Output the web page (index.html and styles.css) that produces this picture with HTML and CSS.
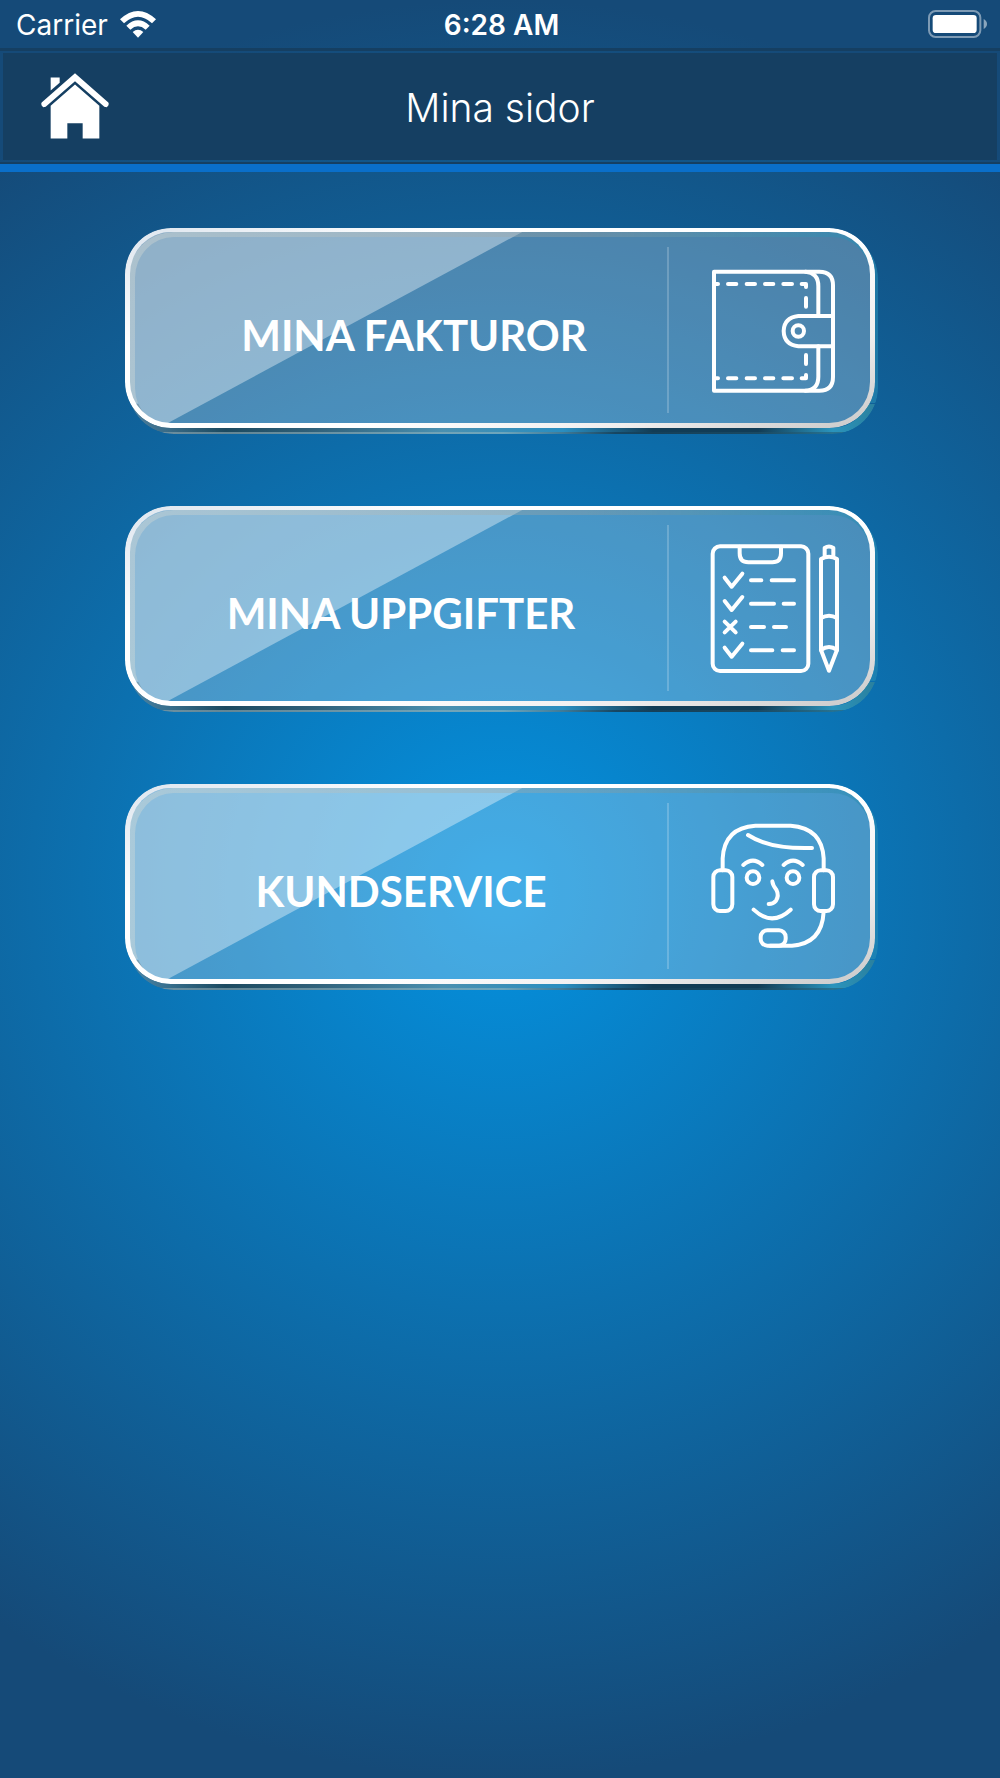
FILE: index.html
```html
<!DOCTYPE html>
<html lang="sv">
<head>
  <meta charset="UTF-8">
  <meta name="viewport" content="width=device-width, initial-scale=1.0">
  <title>Mina sidor</title>
  <link rel="stylesheet" href="styles.css">
</head>
<body>

  <div class="status-bar">
    <div class="carrier">
      <span>Carrier</span>
      <svg class="wifi" viewBox="0 0 108 81" aria-hidden="true">
        <path d="M0 25 Q54 -25 108 25 L96 37 Q54 -2 12 37 Z"/>
        <path d="M19 44 Q54 12 89 44 L77 56 Q54 36 31 56 Z"/>
        <path d="M38 63 Q54 50 70 63 L54 80 Z"/>
      </svg>
    </div>
    <time class="clock">6:28 AM</time>
    <svg class="battery" viewBox="0 0 177 84" aria-hidden="true">
      <rect class="battery-case" x="3" y="3" width="154" height="78" rx="20"/>
      <rect class="battery-level" x="14" y="15" width="132" height="54" rx="10"/>
      <path class="battery-tip" d="M167 27 Q177 33 177 42 Q177 51 167 57 Z"/>
    </svg>
  </div>

  <header class="header">
    <div class="header-panel">
      <a class="home" href="#" aria-label="Hem">
        <svg viewBox="0 0 204 200" aria-hidden="true">
          <path d="M29 13 H56 V29 L29 52 Z"/>
          <path d="M102 0 L202 88 Q206 96 197 102 L190 101 L102 24 L14 101 L7 102 Q-2 96 2 88 Z"/>
          <path d="M102 34 L175 98 V196 H125 V150 H79 V196 H29 V98 Z"/>
        </svg>
      </a>
      <h1>Mina sidor</h1>
    </div>
  </header>

  <main class="menu">
    <button class="card" type="button">
      <span class="shine"></span>
      <span class="edge"></span>
      <span class="rim"></span>
      <span class="label label-invoices">MINA FAKTUROR</span>
      <span class="icon">
        <!-- wallet -->
        <svg viewBox="60 39 390 390" aria-hidden="true">
          <path d="M72 65 H388 Q429 65 429 106 V381 Q429 422 388 422 H72 Z"/>
          <path d="M346 65 Q385 68 385 108 V198 M385 289 V380 Q385 420 346 422"/>
          <path d="M429 198 H325 Q282 203 281 243 Q282 284 325 289 H429"/>
          <circle cx="325" cy="243" r="17"/>
          <path d="M77 102 H84 M114 102 H139 M170 102 H195 M225 102 H250 M280 102 H306 M335 102 H348 V111 M348 144 V170 M348 315 V342 M348 375 V385 H335 M306 385 H280 M250 385 H225 M195 385 H170 M139 385 H114 M84 385 H77"/>
        </svg>
      </span>
    </button>

    <button class="card" type="button">
      <span class="shine"></span>
      <span class="edge"></span>
      <span class="rim"></span>
      <span class="label">MINA UPPGIFTER</span>
      <span class="icon">
        <!-- checklist and pen -->
        <svg viewBox="60 47 390 390" aria-hidden="true">
          <rect x="68" y="63" width="287" height="374" rx="22"/>
          <path d="M149 64 V84 Q149 111 175 111 H247 Q273 111 273 84 V64"/>
          <path d="M104 157 L125 184 L157 145 M104 227 L125 254 L157 215 M104 367 L125 394 L157 355 M104 289 L137 321 M137 289 L104 321"/>
          <path d="M183 165 H214 M245 165 H312 M183 235 H252 M281 235 H312 M183 305 H222 M252 305 H288 M183 375 H247 M278 375 H312"/>
          <path d="M404 91 V68 Q417 59 430 68 V91"/>
          <path d="M393 101 Q417 88 441 101 V374 L417 436 L393 374 Z"/>
          <path d="M393 278 Q417 264 441 278 M393 374 Q417 356 441 374"/>
        </svg>
      </span>
    </button>

    <button class="card" type="button">
      <span class="shine"></span>
      <span class="edge"></span>
      <span class="rim"></span>
      <span class="label">KUNDSERVICE</span>
      <span class="icon">
        <!-- support agent with headset -->
        <svg viewBox="60 40 390 390" aria-hidden="true">
          <path d="M98 194 V158 Q103 66 196 60 H302 Q396 67 401 158 V194"/>
          <rect x="70" y="194" width="57" height="122" rx="20"/>
          <rect x="372" y="194" width="57" height="122" rx="20"/>
          <path d="M401 318 Q396 414 306 420 H240"/>
          <rect x="212" y="374" width="75" height="46" rx="20"/>
          <path d="M174 88 Q240 131 366 127"/>
          <path d="M160 178 Q189 152 217 178 M281 178 Q309 152 338 178"/>
          <circle cx="189" cy="216" r="19"/>
          <circle cx="309" cy="216" r="19"/>
          <path d="M247 227 Q248 238 259 252 Q268 270 258 285 Q250 295 236 295"/>
          <path d="M191 312 Q246 364 302 312"/>
        </svg>
      </span>
    </button>
  </main>

</body>
</html>
```
FILE: styles.css
```css
* {
  box-sizing: border-box;
}
body {
  margin: 0;
  min-height: 100vh;
  font-family: Inter, Roboto, sans-serif;
  color: #fff;
  background: radial-gradient(circle farthest-side at center, #0492e0, #154a78);
}

/* Status bar */
.status-bar {
  display: grid;
  grid-template-columns: 1fr auto 1fr;
  align-items: center;
  height: 48px;
  padding: 2px 13px 0 16px;
  font-size: 28px;
}
.carrier {
  display: flex;
  align-items: center;
  gap: 12px;
}
.wifi {
  width: 36px;
  height: 27px;
  margin-bottom: 2px;
  fill: #fff;
}
.clock {
  font-weight: 600;
}
.battery {
  justify-self: end;
  width: 59px;
  height: 28px;
  margin-bottom: 2px;
}
.battery-case {
  fill: none;
  stroke: #fff;
  stroke-width: 6;
  opacity: 0.45;
}
.battery-level {
  fill: #fff;
}
.battery-tip {
  fill: #fff;
  opacity: 0.5;
}

/* Header */
.header {
  padding: 2px 3px;
  border-top: 3px solid #153f62;
  border-bottom: 8px solid #0a6fca;
  box-shadow: inset 0 -2px #153f62;
}
.header-panel {
  display: grid;
  grid-template-columns: 1fr auto 1fr;
  align-items: center;
  height: 107px;
  margin-bottom: 2px;
  padding: 0 38px;
  background: #153f62;
}
.home svg {
  display: block;
  width: 68px;
  height: 67px;
  fill: #fff;
}
h1 {
  margin: 0;
  padding-top: 2px;
  font-size: 39px;
  font-weight: 300;
}

/* Menu */
.menu {
  display: flex;
  flex-direction: column;
  gap: 78px;
  width: 75%;
  margin: 0 auto;
  padding: 56px 0;
}
.card {
  position: relative;
  display: flex;
  align-items: center;
  height: 200px;
  padding: 0 35px 0 10px;
  border: none;
  border-radius: 46px;
  background: rgba(255, 255, 255, 0.25);
  color: #fff;
  font-family: Lato, sans-serif;
  font-size: 42px;
  font-weight: 700;
  cursor: pointer;
}
.shine {
  position: absolute;
  inset: 4px;
  border-radius: 42px;
  background: rgba(255, 255, 255, 0.38);
  clip-path: polygon(0 0, 53% 0, 5% 100%, 0 100%);
}
.rim,
.edge {
  position: absolute;
  inset: 0;
  padding: 4px 5px 5px;
  border-radius: 46px;
  background: linear-gradient(160deg, #dde5ee, #fff 25%, #fff 60%, #f0eeee 80%, #c8c8c8);
  mask: linear-gradient(#000, #000) content-box exclude, linear-gradient(#000, #000);
}
/* glass thickness showing below and inside the rim */
.edge {
  inset: 4px -3px -6px 3px;
  padding: 5px 7px 6px;
  background:
    linear-gradient(90deg, rgba(130, 155, 165, 0.7), rgba(130, 175, 190, 0.7) 50%, rgba(20, 60, 85, 0.7) 65%, rgba(40, 100, 125, 0.6)) bottom / 100% 2px no-repeat,
    linear-gradient(90deg, rgba(120, 150, 165, 0.6), #1c4a60 13%, #2f5f78 24%, #4a90b0 42%, #2a8ec0 58%, #123c55 70%, #123c55 84%, #2a94bd 94%, #2a7f9c) bottom / 100% 30px no-repeat,
    linear-gradient(90deg, rgba(215, 220, 215, 0.4), rgba(150, 160, 160, 0.4) 60%, rgba(40, 140, 180, 0.6)) top / 100% 171px no-repeat;
}
.label {
  flex: 1;
  padding-top: 14px;
  text-align: center;
}
.label-invoices {
  padding-left: 26px;
}
.icon {
  flex: none;
  margin-top: 4px;
  padding: 16px 0 20px 41px;
  border-left: 2px solid rgba(255, 255, 255, 0.2);
}
.icon svg {
  display: block;
  width: 130px;
  height: 130px;
  overflow: visible;
  fill: none;
  stroke: #fff;
  stroke-width: 12;
  stroke-linecap: round;
  stroke-linejoin: round;
}
```
